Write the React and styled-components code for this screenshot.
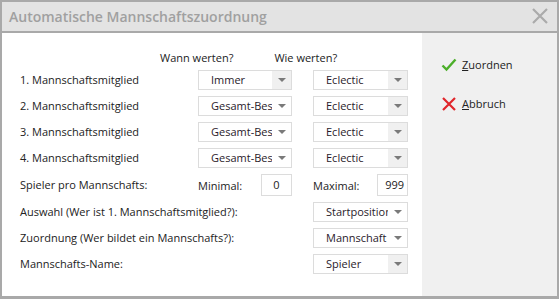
import React from 'react';
import styled, { createGlobalStyle } from 'styled-components';

const GlobalStyle = createGlobalStyle`
  html, body {
    margin: 0;
    padding: 0;
    background: #ffffff;
  }
  body {
    font-family: "Open Sans", "Noto Sans", sans-serif;
    font-size: 11px;
    color: #222;
  }
`;

const Window = styled.div`
  box-sizing: border-box;
  width: 559px;
  height: 299px;
  border: 2px solid #a9a9a9;
  border-bottom-width: 3px;
  display: flex;
  flex-direction: column;
  background: #fff;
`;

const TitleBar = styled.div`
  height: 28px;
  flex: none;
  background: #e3e3e3;
  border-bottom: 2px solid #a9a9a9;
  display: flex;
  align-items: center;
  justify-content: space-between;
  padding: 0 9px 1px 7px;
`;

const Title = styled.div`
  font-size: 14px;
  font-weight: 600;
  color: #a0a0a0;
`;

const Body = styled.div`
  flex: 1;
  display: flex;
  min-height: 0;
`;

const Main = styled.div`
  flex: 1;
  min-width: 0;
  padding: 16px 0 0 18px;
`;

const Side = styled.div`
  width: 135px;
  flex: none;
  background: #f0f0f0;
  padding: 24px 0 0 19px;
  box-sizing: border-box;
  display: flex;
  flex-direction: column;
  gap: 24px;
`;

const HeaderRow = styled.div`
  display: flex;
  height: 17px;
  align-items: center;
  padding-left: 140px;
  gap: 41px;
  margin-bottom: 4px;
`;

const Grid = styled.div`
  display: grid;
  grid-template-columns: 157px 94px 95px;
  column-gap: 21px;
  row-gap: 6px;
  align-items: center;
`;

const Label = styled.div`
  white-space: nowrap;
  line-height: 20px;
`;

const Span = styled(Label)`
  grid-column: 1 / span 2;
`;

const Select = styled.div`
  box-sizing: border-box;
  height: 20px;
  border: 1px solid #dcdcdc;
  display: flex;
  background: #fff;
`;

const SelectText = styled.div`
  flex: 1;
  overflow: hidden;
  white-space: nowrap;
  padding-left: 12px;
  line-height: 18px;
  color: #2a1a2a;
`;

const Arrow = styled.div`
  width: 19px;
  flex: none;
  background: ${(p) => (p.$plain ? '#fff' : '#f0f0f0')};
  display: flex;
  align-items: center;
  justify-content: center;

  &::after {
    content: '';
    border-left: 4px solid transparent;
    border-right: 4px solid transparent;
    border-top: 4px solid #7a7a7a;
  }
`;

const Pair = styled.div`
  display: flex;
  align-items: center;
  justify-content: space-between;
`;

const NumBox = styled.div`
  box-sizing: border-box;
  width: ${(p) => p.$w}px;
  height: 22px;
  border: 1px solid #dcdcdc;
  text-align: ${(p) => p.$align || 'center'};
  padding-right: ${(p) => (p.$align === 'right' ? '3px' : '0')};
  line-height: 20px;
`;

const Action = styled.div`
  display: flex;
  align-items: center;
  gap: 5px;
  font-size: 11px;
  color: #222;

  u {
    text-decoration: underline;
  }
`;

const Dropdown = ({ value, plain }) => (
  <Select>
    <SelectText>{value}</SelectText>
    <Arrow $plain={plain} />
  </Select>
);

const members = [
  ['1. Mannschaftsmitglied', 'Immer', false],
  ['2. Mannschaftsmitglied', 'Gesamt-Besten', true],
  ['3. Mannschaftsmitglied', 'Gesamt-Besten', true],
  ['4. Mannschaftsmitglied', 'Gesamt-Besten', true],
];

export default function App() {
  return (
    <>
      <GlobalStyle />
      <Window>
        <TitleBar>
          <Title>Automatische Mannschaftszuordnung</Title>
          <svg width="16" height="16" viewBox="0 0 16 16">
            <path d="M1 1 L15 15 M15 1 L1 15" stroke="#ababab" strokeWidth="2.2" />
          </svg>
        </TitleBar>
        <Body>
          <Main>
            <HeaderRow>
              <span>Wann werten?</span>
              <span>Wie werten?</span>
            </HeaderRow>
            <Grid>
              {members.map(([label, when, plain]) => (
                <React.Fragment key={label}>
                  <Label>{label}</Label>
                  <Dropdown value={when} plain={plain} />
                  <Dropdown value="Eclectic" />
                </React.Fragment>
              ))}
              <Label>Spieler pro Mannschafts:</Label>
              <Pair>
                <span>Minimal:</span>
                <NumBox $w={31}>0</NumBox>
              </Pair>
              <Pair>
                <span>Maximal:</span>
                <NumBox $w={31} $align="right">999</NumBox>
              </Pair>
              <Span>Auswahl (Wer ist 1. Mannschaftsmitglied?):</Span>
              <Dropdown value="Startposition" plain />
              <Span>Zuordnung (Wer bildet ein Mannschafts?):</Span>
              <Dropdown value="Mannschaft" plain />
              <Span>Mannschafts-Name:</Span>
              <Dropdown value="Spieler" />
            </Grid>
          </Main>
          <Side>
            <Action>
              <svg width="16" height="14" viewBox="0 0 16 14">
                <path d="M1.5 7.5 L5.5 11.5 L14.5 1.5" fill="none" stroke="#4caf2a" strokeWidth="2.4" />
              </svg>
              <span><u>Z</u>uordnen</span>
            </Action>
            <Action>
              <svg width="16" height="14" viewBox="0 0 16 14">
                <path d="M2 1 L14 13 M14 1 L2 13" stroke="#e0262b" strokeWidth="2.2" />
              </svg>
              <span><u>A</u>bbruch</span>
            </Action>
          </Side>
        </Body>
      </Window>
    </>
  );
}
